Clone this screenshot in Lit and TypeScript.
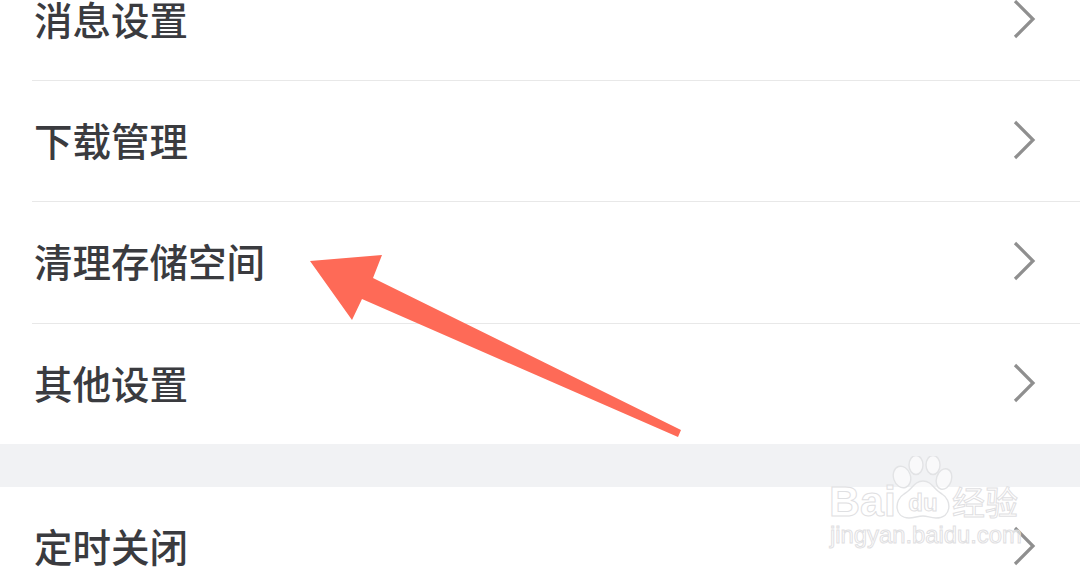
import { LitElement, html, css, svg } from "lit";
import { customElement } from "lit/decorators.js";

const GROUP_ONE = ["消息设置", "下载管理", "清理存储空间", "其他设置"];
const GROUP_TWO = ["定时关闭"];

const chevron = svg`<path d="M2 2 L20 20 L2 38" fill="none" stroke="#8f8f8f" stroke-width="3.2" />`;

@customElement("app-root")
export class AppRoot extends LitElement {
  private _row(label: string) {
    return html`
      <div class="row">
        <span class="label">${label}</span>
        <svg class="chevron" viewBox="0 0 23 40" width="23" height="40">${chevron}</svg>
      </div>
    `;
  }

  render() {
    return html`
      <div class="page">
        <div class="list first">${GROUP_ONE.map((l) => this._row(l))}</div>
        <div class="band"></div>
        <div class="list">${GROUP_TWO.map((l) => this._row(l))}</div>

        <!-- red arrow drawn on top of the screenshot -->
        <svg class="arrow" viewBox="0 0 1080 573" width="1080" height="573">
          <polygon
            points="310,261 382,255 373,278 681,430 678,437 362,299 352,320"
            fill="#fe6a57"
          />
        </svg>

        <!-- watermark -->
        <div class="mark">
          <span class="bai">Bai</span>
          <svg class="paw" viewBox="0 0 62 64" width="62" height="64">
            <g fill="rgba(255,255,255,0.55)" stroke="#e2e3e5" stroke-width="1.4">
              <ellipse cx="10" cy="21" rx="8.5" ry="11" transform="rotate(-18 10 21)" />
              <ellipse cx="24" cy="9" rx="7" ry="9.5" />
              <ellipse cx="41" cy="9" rx="7" ry="9.5" />
              <ellipse cx="52" cy="23" rx="7.5" ry="10.5" transform="rotate(18 52 23)" />
              <path d="M31 25 C40 25 42 34 50 38 C60 44 60 62 44 62 C38 62 36 60 31 60 C26 60 22 62 17 62 C2 62 2 44 12 38 C20 34 22 25 31 25 Z" />
            </g>
            <text x="31" y="55" text-anchor="middle" class="du">du</text>
          </svg>
          <span class="cn">经验</span>
          <span class="url">jingyan.baidu.com</span>
        </div>
      </div>
    `;
  }

  static styles = css`
    :host {
      display: block;
    }

    .page {
      position: relative;
      width: 1080px;
      height: 573px;
      overflow: hidden;
      background: #fff;
      font-family: "Noto Sans CJK SC", "Liberation Sans", sans-serif;
    }

    .list {
      display: flex;
      flex-direction: column;
      padding: 0 0 0 32px;
    }

    .list.first {
      margin-top: -40px;
      margin-bottom: -1px;
    }

    .row {
      display: flex;
      align-items: center;
      justify-content: space-between;
      height: 121.2px;
      padding: 0 44px 0 2px;
      border-bottom: 1px solid #e8e8e8;
      box-sizing: border-box;
    }

    .list .row:last-child {
      border-bottom: none;
    }

    .label {
      font-size: 38.5px;
      font-weight: 500;
      color: #3a3b3f;
      line-height: 1;
      padding-bottom: 4px;
    }

    .chevron {
      flex: none;
      margin-bottom: 2px;
    }

    .band {
      height: 43px;
      background: #f1f2f4;
    }

    .arrow {
      position: absolute;
      left: 0;
      top: 0;
    }

    .mark {
      position: absolute;
      left: 830px;
      top: 458px;
      width: 200px;
      height: 95px;
    }

    .mark span {
      position: absolute;
      color: rgba(255, 255, 255, 0.5);
      -webkit-text-stroke: 1px #dfe0e2;
      line-height: 1;
    }

    .bai {
      left: -1px;
      top: 22px;
      font-family: "Liberation Sans", sans-serif;
      font-size: 43px;
      font-weight: 700;
    }

    .paw {
      position: absolute;
      left: 62px;
      top: -2px;
    }

    .du {
      font-family: "Liberation Sans", sans-serif;
      font-size: 24px;
      font-weight: 700;
      fill: transparent;
      stroke: #dfe0e2;
      stroke-width: 1;
    }

    .cn {
      left: 122px;
      top: 27px;
      font-size: 33px;
    }

    .url {
      left: 0;
      top: 65px;
      font-family: "Liberation Sans", sans-serif;
      font-size: 23.8px;
      white-space: nowrap;
    }
  `;
}
